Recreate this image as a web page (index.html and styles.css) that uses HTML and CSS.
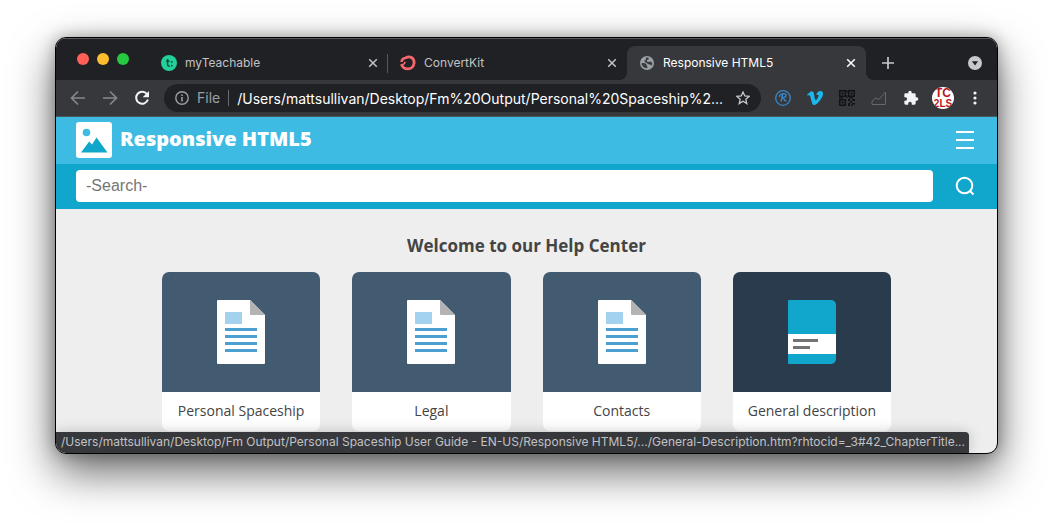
FILE: index.html
```html
<!DOCTYPE html>
<html lang="en">
<head>
<meta charset="utf-8">
<title>Responsive HTML5</title>
<link rel="stylesheet" href="styles.css">
</head>
<body>
<div class="window">
  <div class="tab-strip">
    <div class="lights">
      <span class="light light-close"></span>
      <span class="light light-min"></span>
      <span class="light light-max"></span>
    </div>
    <div class="tab tab-divided">
      <svg class="favicon" viewBox="0 0 16 16"><circle cx="8" cy="8" r="8" fill="#23cf9a"/><path d="M6.600 4v5.600q0 1.600 1.600 1.600h.6M5 6.300h3.600" fill="none" stroke="#12503f" stroke-width="1.500"/><circle cx="10.800" cy="7" r=".9" fill="#12503f"/><circle cx="10.800" cy="10.700" r=".9" fill="#12503f"/></svg>
      <span class="tab-title">myTeachable</span>
      <button class="tab-close" aria-label="Close myTeachable"><svg viewBox="0 0 10 10"><path d="M1.200 1.200l7.600 7.600M8.800 1.200L1.200 8.800"/></svg></button>
    </div>
    <div class="tab">
      <svg class="favicon" viewBox="0 0 16 16" fill="none" stroke="#f4686d"><path d="M5.800 3C9.500.2 14.300 3 14.100 7.800 13.800 11.500 11.300 13.900 7.800 13.900 4.900 13.900 2.600 12.400 1.600 9.800" stroke-width="2.800"/><path d="M1.500 7C1.700 4.800 3.600 3 6.500 2.800" stroke-width="2.600"/><path d="M.6 9.500C3.200 10.300 4.600 8.800 5.200 6.800" stroke-width="1.600"/></svg>
      <span class="tab-title">ConvertKit</span>
      <button class="tab-close" aria-label="Close ConvertKit"><svg viewBox="0 0 10 10"><path d="M1.200 1.200l7.600 7.600M8.800 1.200L1.200 8.800"/></svg></button>
    </div>
    <div class="tab tab-active">
      <svg class="favicon favicon-globe" viewBox="0 0 16 16"><circle cx="8" cy="8" r="8" fill="#9aa0a6"/><path d="M1.800 8.200C3.500 7.600 6 8 7.300 9.300 7.800 10.300 7.200 11 8.400 11.700V13.800C5 14.300 1.900 11.500 1.800 8.200ZM6.800 2C8.300 1.700 9 1.800 10 2.200L9.700 4 8 4.500 7.800 6.200 9.500 6.800 11.800 6.200 14 7.800C14.200 9 13.700 10 13 11L11.600 9.600 9.500 9.500 7.600 8 5.300 6.900 5 5.500 6.600 4.600Z" fill="#3a3b3f"/></svg>
      <span class="tab-title">Responsive HTML5</span>
      <button class="tab-close" aria-label="Close Responsive HTML5"><svg viewBox="0 0 10 10"><path d="M1.200 1.200l7.600 7.600M8.800 1.200L1.200 8.800"/></svg></button>
    </div>
    <button class="new-tab" aria-label="New tab"><svg viewBox="0 0 12 12"><path d="M6 0v12M0 6h12" stroke="#c6c8cb" stroke-width="1.700"/></svg></button>
    <button class="tab-search" aria-label="Search tabs"><svg viewBox="0 0 14 14"><circle cx="7" cy="7" r="7" fill="#c6c8cb"/><path d="M4 5.200h6L7 9.400Z" fill="#202124"/></svg></button>
  </div>

  <div class="toolbar">
    <div class="tools">
      <button class="tool" aria-label="Back"><svg width="16" height="16" viewBox="0 0 16 16" fill="none" stroke="#85888c" stroke-width="1.700"><path d="M15 8H2M8 1.500L1.500 8 8 14.500"/></svg></button>
      <button class="tool" aria-label="Forward"><svg width="16" height="16" viewBox="0 0 16 16" fill="none" stroke="#85888c" stroke-width="1.700"><path d="M1 8h13M8 1.500L14.500 8 8 14.500"/></svg></button>
      <button class="tool" aria-label="Reload"><svg width="16" height="16" viewBox="0 0 16 16"><path d="M13 4.200A6 6 0 1 0 13.900 9.500" fill="none" stroke="#f1f3f4" stroke-width="2"/><path d="M15 1v6.300H8.700Z" fill="#f1f3f4"/></svg></button>
    </div>
    <div class="omnibox">
      <svg width="14" height="14" viewBox="0 0 14 14" fill="none" stroke="#9aa0a6" stroke-width="1.400"><circle cx="7" cy="7" r="6.200"/><path d="M7 6v4.400M7 3.400v1.500" stroke-width="1.600"/></svg>
      <span class="scheme">File</span>
      <input class="address" type="text" aria-label="Address" value="/Users/mattsullivan/Desktop/Fm%20Output/Personal%20Spaceship%2...">
      <button class="star" aria-label="Bookmark"><svg width="14" height="14" viewBox="0 0 14 14"><path d="M7 1l1.800 4 4.300.4-3.300 2.900 1 4.300L7 10.300l-3.800 2.300 1-4.300L.9 5.400 5.200 5Z" fill="none" stroke="#c6c8cb" stroke-width="1.300"/></svg></button>
    </div>
    <div class="tools">
      <button class="tool" aria-label="R extension"><svg width="16" height="16" viewBox="0 0 16 16" fill="none" stroke="#3a87c8"><circle cx="8" cy="8" r="7.300" stroke-width="1.300"/><path d="M7.700 4.300L6 11.700M4.500 7C4.200 4.500 7 3.500 9 3.600 12.500 3.900 11.500 7.500 7.600 7.800 9.600 8 8.400 11.500 11.500 10.600" stroke-width="1.400"/></svg></button>
      <button class="tool" aria-label="Vimeo"><svg width="16" height="14" viewBox="0 0 24 21"><path d="M24 5c-.1 2.300-1.700 5.500-4.900 9.600-3.300 4.200-6 6.400-8.300 6.400-1.400 0-2.600-1.300-3.500-3.900L5.400 10C4.700 7.400 3.900 6.100 3.100 6.100c-.2 0-.8.400-1.900 1.100L0 5.800C1.200 4.700 2.300 3.700 3.500 2.700 5 1.300 6.200.6 7 .5c1.900-.2 3.100 1.100 3.500 3.900.5 3 .8 4.900 1 5.600.5 2.500 1.100 3.700 1.800 3.700.5 0 1.300-.8 2.300-2.400 1-1.600 1.600-2.800 1.700-3.700.1-1.400-.4-2.100-1.700-2.100-.6 0-1.200.1-1.800.4C15 2 17.300-.1 20.700 0 23.100.1 24.200 1.800 24 5z" fill="#1ab7ea"/></svg></button>
      <button class="tool" aria-label="QR code"><svg width="16" height="16" viewBox="0 0 16 16"><path d="M.7.700h5.600v5.600H.7zM9.700.700h5.600v5.600H9.700zM.7 9.700h5.600v5.600H.7z" fill="none" stroke="#111214" stroke-width="1.400"/><path d="M2.500 2.500h2v2h-2zM11.500 2.500h2v2h-2zM2.500 11.500h2v2h-2zM9 9h2v2H9zM13 9h3v2h-3zM11 11h2v2h-2zM9 13h2v3H9zM13 13h3v1.500h-3zM12 14.500h1.500V16H12zM7.300 0h1.200v3H7.300zM7.300 5h1.200v3H7.300zM0 7.300h4v1.200H0zM10 7.300h4v1.200h-4z" fill="#111214"/></svg></button>
      <button class="tool" aria-label="Statistics"><svg width="16" height="16" viewBox="0 0 16 16" fill="none" stroke="#66686c"><path d="M1 14.500V11l4-3 3 1.500 6.500-7.500v12.500Z"/></svg></button>
      <button class="tool" aria-label="Extensions"><svg width="16" height="16" viewBox="0 0 24 24"><path d="M20.500 11H19V7a2 2 0 0 0-2-2h-4V3.500a2.500 2.500 0 0 0-5 0V5H4a2 2 0 0 0-2 2v3.800h1.500a2.700 2.700 0 0 1 0 5.400H2V20a2 2 0 0 0 2 2h3.800v-1.500a2.700 2.700 0 0 1 5.400 0V22H17a2 2 0 0 0 2-2v-4h1.500a2.500 2.500 0 0 0 0-5z" fill="#f1f3f4"/></svg></button>
      <button class="tool" aria-label="Profile"><span class="avatar"><span class="avatar-top">TC</span><span class="avatar-bottom">2LS</span></span></button>
      <button class="tool" aria-label="Menu"><svg width="4" height="14" viewBox="0 0 4 14" fill="#f1f3f4"><circle cx="2" cy="2" r="1.600"/><circle cx="2" cy="7" r="1.600"/><circle cx="2" cy="12" r="1.600"/></svg></button>
    </div>
  </div>

  <header class="site-header">
    <svg class="logo" viewBox="0 0 36 36"><rect width="36" height="36" rx="3" fill="#fff"/><circle cx="10.500" cy="10.500" r="3.800" fill="#3dbbe3"/><path d="M5 30.500L13.200 19.500 16 22.500 20.500 15.500 31.500 30.500Z" fill="#11a7cd"/></svg>
    <h1 class="site-title">Responsive HTML5</h1>
    <button class="site-button" aria-label="Open menu"><svg width="18" height="18" viewBox="0 0 18 18"><path d="M0 1h18M0 9h18M0 17h18" stroke="#fff" stroke-width="2"/></svg></button>
  </header>
  <form class="search">
    <input class="search-input" type="search" placeholder="-Search-" aria-label="Search">
    <button class="site-button" type="button" aria-label="Search"><svg width="20" height="20" viewBox="0 0 20 20" fill="none" stroke="#fff" stroke-width="2"><circle cx="9.500" cy="9.500" r="7.800"/><path d="M15 15l3.500 3.500"/></svg></button>
  </form>

  <main class="content">
    <h2 class="welcome">Welcome to our Help Center</h2>
    <div class="cards">
      <a class="card" href="#personal">
        <span class="card-art"><svg width="48" height="64" viewBox="0 0 48 64"><path d="M1 0h32l15 15v48a1 1 0 0 1-1 1H1a1 1 0 0 1-1-1V1a1 1 0 0 1 1-1z" fill="#fff"/><path d="M33 0l15 15H34a1 1 0 0 1-1-1z" fill="#b3b3b3"/><path d="M8 12h17v12H8z" fill="#a3d2ee"/><path d="M8 28h32v3H8zM8 35h32v3H8zM8 42h32v3H8zM8 49h32v3H8z" fill="#4b9fd1"/></svg></span>
        <span class="card-label">Personal Spaceship</span>
      </a>
      <a class="card" href="#legal">
        <span class="card-art"><svg width="48" height="64" viewBox="0 0 48 64"><path d="M1 0h32l15 15v48a1 1 0 0 1-1 1H1a1 1 0 0 1-1-1V1a1 1 0 0 1 1-1z" fill="#fff"/><path d="M33 0l15 15H34a1 1 0 0 1-1-1z" fill="#b3b3b3"/><path d="M8 12h17v12H8z" fill="#a3d2ee"/><path d="M8 28h32v3H8zM8 35h32v3H8zM8 42h32v3H8zM8 49h32v3H8z" fill="#4b9fd1"/></svg></span>
        <span class="card-label">Legal</span>
      </a>
      <a class="card" href="#contacts">
        <span class="card-art"><svg width="48" height="64" viewBox="0 0 48 64"><path d="M1 0h32l15 15v48a1 1 0 0 1-1 1H1a1 1 0 0 1-1-1V1a1 1 0 0 1 1-1z" fill="#fff"/><path d="M33 0l15 15H34a1 1 0 0 1-1-1z" fill="#b3b3b3"/><path d="M8 12h17v12H8z" fill="#a3d2ee"/><path d="M8 28h32v3H8zM8 35h32v3H8zM8 42h32v3H8zM8 49h32v3H8z" fill="#4b9fd1"/></svg></span>
        <span class="card-label">Contacts</span>
      </a>
      <a class="card card-hover" href="#general">
        <span class="card-art"><svg width="48" height="64" viewBox="0 0 48 64"><path d="M1 0h42a5 5 0 0 1 5 5v54a5 5 0 0 1-5 5H1a1 1 0 0 1-1-1V1a1 1 0 0 1 1-1z" fill="#11a7cd"/><path d="M0 34h48v20H0z" fill="#fff"/><path d="M5 39h25v3H5zM5 46h17v3H5z" fill="#737373"/></svg></span>
        <span class="card-label">General description</span>
      </a>
    </div>
  </main>
  <div class="status">/Users/mattsullivan/Desktop/Fm Output/Personal Spaceship User Guide - EN-US/Responsive HTML5/.../General-Description.htm?rhtocid=_3#42_ChapterTitle...</div>
</div>
</body>
</html>
```
FILE: styles.css
```css
* {
  box-sizing: border-box;
}

body {
  margin: 0;
  padding: 37px 55px 72px;
  background: #fff;
  font-family: Inter, sans-serif;
}

button {
  display: flex;
  align-items: center;
  justify-content: center;
  padding: 0;
  border: 0;
  background: none;
}

svg {
  display: block;
  flex: none;
}

.window {
  position: relative;
  overflow: hidden;
  border: 1px solid #000;
  border-radius: 11px;
  background: #eee;
  box-shadow: 0 18px 44px rgba(0, 0, 0, 0.6), 0 0 16px rgba(0, 0, 0, 0.3);
}

.tab-strip {
  display: flex;
  height: 42px;
  padding-right: 15px;
  background: #202124;
  box-shadow: inset 0 1px #5b5c5f;
}

.lights {
  display: flex;
  flex: none;
  gap: 8px;
  width: 93px;
  padding: 15px 0 0 21px;
}

.light {
  width: 12px;
  height: 12px;
  border-radius: 50%;
}

.light-close { background: #ff5f57; }
.light-min { background: #febc2e; }
.light-max { background: #28c840; }

.tab {
  position: relative;
  display: flex;
  flex: 0 1 239px;
  align-items: center;
  gap: 8px;
  min-width: 0;
  height: 34px;
  margin-top: 8px;
  padding: 0 10px 0 12px;
  color: #c0c2c5;
  font-size: 12px;
  line-height: 16px;
}

.tab-divided::after {
  content: "";
  position: absolute;
  top: 8px;
  right: 0;
  width: 1px;
  height: 19px;
  background: #55575b;
}

.tab-active {
  border-radius: 8px 8px 0 0;
  background: #37383c;
  color: #fff;
}

.tab-active::before,
.tab-active::after {
  content: "";
  position: absolute;
  bottom: 0;
  width: 8px;
  height: 8px;
}

.tab-active::before {
  left: -8px;
  background: radial-gradient(circle at 0 0, transparent 8px, #37383c 8px);
}

.tab-active::after {
  right: -8px;
  background: radial-gradient(circle at 100% 0, transparent 8px, #37383c 8px);
}

.favicon {
  width: 16px;
  height: 16px;
}

.favicon-globe {
  padding: 1px;
}

.tab-title {
  flex: 1;
  overflow: hidden;
  white-space: nowrap;
}

.tab-close svg {
  width: 10px;
  height: 10px;
  fill: none;
  stroke: currentColor;
  stroke-width: 1.5;
}

.tab-close {
  color: inherit;
}

.new-tab {
  width: 44px;
  margin-top: 8px;
}

.new-tab svg {
  width: 12px;
  height: 12px;
}

.tab-search {
  margin: 8px 0 0 auto;
}

.tab-search svg {
  width: 14px;
  height: 14px;
}

.toolbar {
  display: flex;
  align-items: center;
  gap: 6px;
  height: 37px;
  padding: 0 6px;
  border-bottom: 1px solid #4c5a60;
  background: #37383c;
}

.tools {
  display: flex;
  flex: none;
}

.tool {
  width: 32px;
  height: 28px;
}

.avatar {
  display: flex;
  flex-direction: column;
  align-items: center;
  justify-content: center;
  width: 22px;
  height: 22px;
  overflow: hidden;
  border-radius: 50%;
  background: #fff;
  color: #b8161d;
  font-family: "Liberation Sans", sans-serif;
  font-weight: 700;
}

.avatar-top {
  font-size: 12px;
  line-height: 11px;
}

.avatar-bottom {
  font-size: 10px;
  line-height: 10px;
}

.omnibox {
  display: flex;
  flex: 1;
  align-items: center;
  gap: 8px;
  min-width: 0;
  height: 28px;
  padding: 0 11px;
  border-radius: 14px;
  background: #202124;
  font-size: 14px;
}

.scheme {
  padding-right: 8px;
  border-right: 1px solid #6a6c70;
  color: #9aa0a6;
  line-height: 16px;
}

.address {
  flex: 1;
  min-width: 0;
  padding: 0;
  border: 0;
  background: none;
  color: #fff;
  font: inherit;
}

.site-header,
.search {
  display: flex;
  align-items: center;
  padding: 0 14px 1px 20px;
}

.site-header {
  gap: 8px;
  height: 47px;
  background: #3dbbe3;
}

.logo {
  width: 36px;
  height: 36px;
}

.site-title {
  flex: 1;
  margin: 0;
  padding-bottom: 2px;
  color: #fff;
  font: 800 20px/28px "Open Sans", sans-serif;
}

.site-button {
  flex: none;
  width: 36px;
  height: 36px;
}

.search {
  gap: 14px;
  height: 45px;
  background: #11a7cd;
}

.search-input {
  flex: 1;
  min-width: 0;
  height: 32px;
  padding: 0 10px;
  border: 0;
  border-radius: 4px;
  background: #fff;
  font: 16px "Liberation Sans", sans-serif;
}

.search-input::placeholder {
  color: #757575;
}

.content {
  padding: 25px 20px 22px;
  color: #444;
  font-family: "Open Sans", sans-serif;
}

.welcome {
  margin: 0 0 14px;
  font-size: 17px;
  line-height: 24px;
  text-align: center;
}

.cards {
  display: grid;
  grid-template-columns: repeat(4, 1fr);
  gap: 32px;
  max-width: 729px;
  margin: 0 auto;
}

.card {
  overflow: hidden;
  border-radius: 7px;
  background: #fff;
  color: #444;
  text-decoration: none;
}

.card-art {
  display: flex;
  align-items: center;
  justify-content: center;
  height: 120px;
  background: #435b70;
}

.card-hover .card-art {
  background: #2b3b4e;
}

.card-label {
  display: block;
  padding: 7px 0 8px;
  font-size: 14px;
  font-weight: 500;
  line-height: 24px;
  text-align: center;
  white-space: nowrap;
}

.status {
  position: absolute;
  bottom: 0;
  left: 0;
  max-width: 100%;
  height: 21px;
  padding: 0 4px 0 5px;
  overflow: hidden;
  border-radius: 0 4px 0 0;
  background: #37383c;
  box-shadow: 0 0 14px rgba(0, 0, 0, 0.2);
  color: #c0c2c5;
  font-size: 12px;
  line-height: 20px;
  white-space: nowrap;
}
```
